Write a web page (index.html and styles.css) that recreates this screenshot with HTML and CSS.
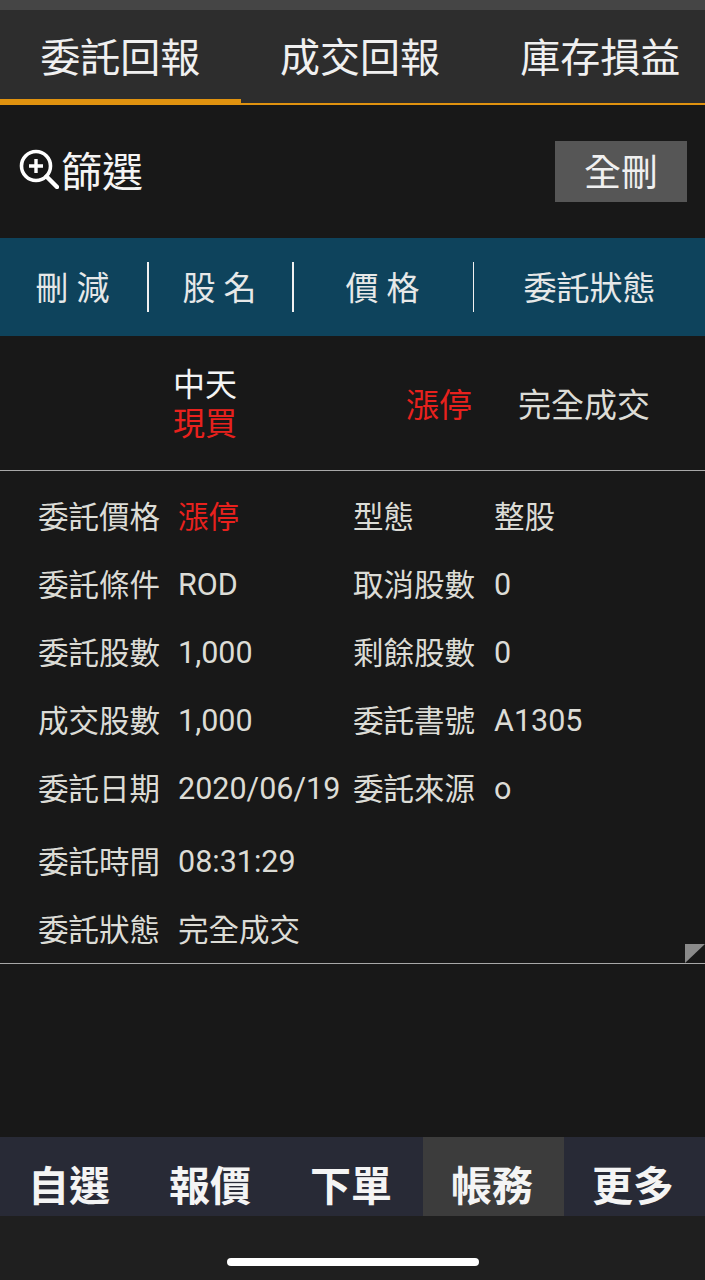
FILE: index.html
```html
<!DOCTYPE html>
<html lang="zh-Hant">
  <head>
    <meta charset="UTF-8" />
    <meta name="viewport" content="width=device-width, initial-scale=1.0" />
    <title>委託回報</title>
    <link rel="stylesheet" href="styles.css">
  </head>
  <body>
    <div class="status-strip"></div>

    <nav class="tabs">
      <a class="tab active">委託回報</a>
      <a class="tab">成交回報</a>
      <a class="tab">庫存損益</a>
    </nav>

    <section class="filter">
      <div class="filter-label">
        <svg class="filter-icon" viewBox="0 0 40 40" width="40" height="40">
          <circle cx="17" cy="17" r="14.5" fill="none" stroke="#fff" stroke-width="3.6" />
          <path d="M10 17H24M17 10V24" fill="none" stroke="#fff" stroke-width="3.4" />
          <path d="M27.5 27.5L38 38" fill="none" stroke="#fff" stroke-width="4.4" stroke-linecap="round" />
        </svg>
        <span>篩選</span>
      </div>
      <button class="delete-all">全刪</button>
    </section>

    <header class="table-head">
      <div class="head-cell spaced">刪減</div>
      <div class="head-cell spaced">股名</div>
      <div class="head-cell spaced">價格</div>
      <div class="head-cell">委託狀態</div>
    </header>

    <section class="order-row">
      <div class="order-name">
        <div>中天</div>
        <div class="red">現買</div>
      </div>
      <div class="order-price red">漲停</div>
      <div class="order-state">完全成交</div>
    </section>

    <section class="details">
      <div class="detail-row">
        <span>委託價格</span><span class="red">漲停</span>
        <span>型態</span><span>整股</span>
      </div>
      <div class="detail-row">
        <span>委託條件</span><span class="num">ROD</span>
        <span>取消股數</span><span class="num">0</span>
      </div>
      <div class="detail-row">
        <span>委託股數</span><span class="num">1,000</span>
        <span>剩餘股數</span><span class="num">0</span>
      </div>
      <div class="detail-row">
        <span>成交股數</span><span class="num">1,000</span>
        <span>委託書號</span><span class="num">A1305</span>
      </div>
      <div class="detail-row">
        <span>委託日期</span><span class="num">2020/06/19</span>
        <span>委託來源</span><span class="num">o</span>
      </div>
      <div class="detail-row time-row">
        <span>委託時間</span><span class="num">08:31:29</span>
      </div>
      <div class="detail-row">
        <span>委託狀態</span><span>完全成交</span>
      </div>
      <div class="corner"></div>
    </section>

    <div class="spacer"></div>

    <nav class="bottom-nav">
      <a class="nav-item">自選</a>
      <a class="nav-item">報價</a>
      <a class="nav-item">下單</a>
      <a class="nav-item active">帳務</a>
      <a class="nav-item">更多</a>
    </nav>

    <footer class="home-bar">
      <div class="home-indicator"></div>
    </footer>
  </body>
</html>
```

FILE: styles.css
```css
*,
*::after,
*::before {
  box-sizing: border-box;
}

html,
body {
  height: 100%;
}

body {
  margin: 0;
  display: flex;
  flex-direction: column;
  height: 1280px;
  overflow: hidden;
  background-color: #181818;
  color: #dcdcd6;
  font-family: "Noto Sans CJK TC", "Noto Sans", sans-serif;
  font-weight: 400;
}

.red {
  color: #e8211d;
}

.status-strip {
  height: 10px;
  background-color: #454545;
}

.tabs {
  display: flex;
  height: 95px;
  background-color: #2d2d2d;
  border-bottom: 2px solid #e0920f;
}

.tab {
  width: 240.5px;
  padding-top: 18px;
  text-align: center;
  font-size: 40px;
  line-height: 54px;
  color: #f0f0f0;
}

.tab:nth-child(2) {
  width: 239px;
}

.tab:nth-child(3) {
  flex: 1;
  width: auto;
  padding-left: 16px;
}

.tab.active {
  height: 95px;
  border-bottom: 6px solid #e0920f;
}

.filter {
  display: flex;
  justify-content: space-between;
  align-items: center;
  height: 133px;
  padding: 0 18px 6px 20px;
}

.filter-label {
  display: flex;
  align-items: center;
  gap: 2px;
  font-size: 41px;
  color: #f4f4f4;
}

.filter-icon {
  flex: none;
  margin-left: -1px;
}

.delete-all {
  width: 132px;
  height: 61px;
  margin-top: 6px;
  padding: 0 0 4px;
  border: 0;
  background-color: #565656;
  color: #f0f0f0;
  font-family: inherit;
  font-weight: 400;
  font-size: 37px;
}

.table-head {
  display: flex;
  align-items: center;
  height: 98px;
  background-color: #0e435c;
  color: #e6e8e8;
  font-size: 33px;
}

.head-cell {
  display: flex;
  justify-content: center;
  align-items: center;
  height: 50px;
  padding-bottom: 2px;
  border-right: 2px solid #f0f0f0;
}

.head-cell:nth-child(1) {
  width: 149px;
}

.head-cell:nth-child(2) {
  width: 145px;
}

.head-cell:nth-child(3) {
  width: 180px;
  border-right-width: 1px;
}

.head-cell:nth-child(4) {
  flex: 1;
  border-right: 0;
}

.spaced {
  letter-spacing: 8px;
  padding-left: 6px;
}

.order-row {
  display: grid;
  grid-template-columns: 173px 233px 112px 1fr;
  align-items: center;
  height: 135px;
  border-bottom: 1px solid #a8a8a8;
  font-size: 33px;
}

.order-name {
  grid-column: 2;
  margin-top: -2px;
  font-size: 32px;
  line-height: 39px;
  color: #f4f4f4;
}

.order-price {
  grid-column: 3;
}

.order-state {
  grid-column: 4;
}

.details {
  position: relative;
  height: 493px;
  padding-top: 10px;
  border-bottom: 1px solid #a8a8a8;
  font-size: 30.5px;
}

.detail-row {
  display: grid;
  grid-template-columns: 140px 175px 141px 1fr;
  align-items: center;
  height: 68px;
  padding-left: 38px;
  white-space: nowrap;
}

.num {
  padding-top: 2px;
  font-family: Roboto, sans-serif;
}

.time-row {
  margin-top: 5px;
}

.corner {
  position: absolute;
  right: 0;
  bottom: 0;
  width: 20px;
  height: 19px;
  background-color: #8a8a8a;
  clip-path: polygon(0 0, 100% 0, 0 100%);
}

.spacer {
  flex: 1;
}

.bottom-nav {
  display: flex;
  height: 79px;
  background-color: #282a36;
}

.nav-item {
  width: 141px;
  padding: 12px 3px 0 0;
  text-align: center;
  font-size: 41px;
  font-weight: 700;
  line-height: 68px;
  color: #f4f4f4;
}

.nav-item.active {
  background-color: #3c3c3c;
}

.home-bar {
  display: flex;
  justify-content: center;
  height: 64px;
  padding-top: 42px;
  background-color: #1f1f1f;
}

.home-indicator {
  width: 252px;
  height: 8px;
  border-radius: 4px;
  background-color: #fff;
}
```
